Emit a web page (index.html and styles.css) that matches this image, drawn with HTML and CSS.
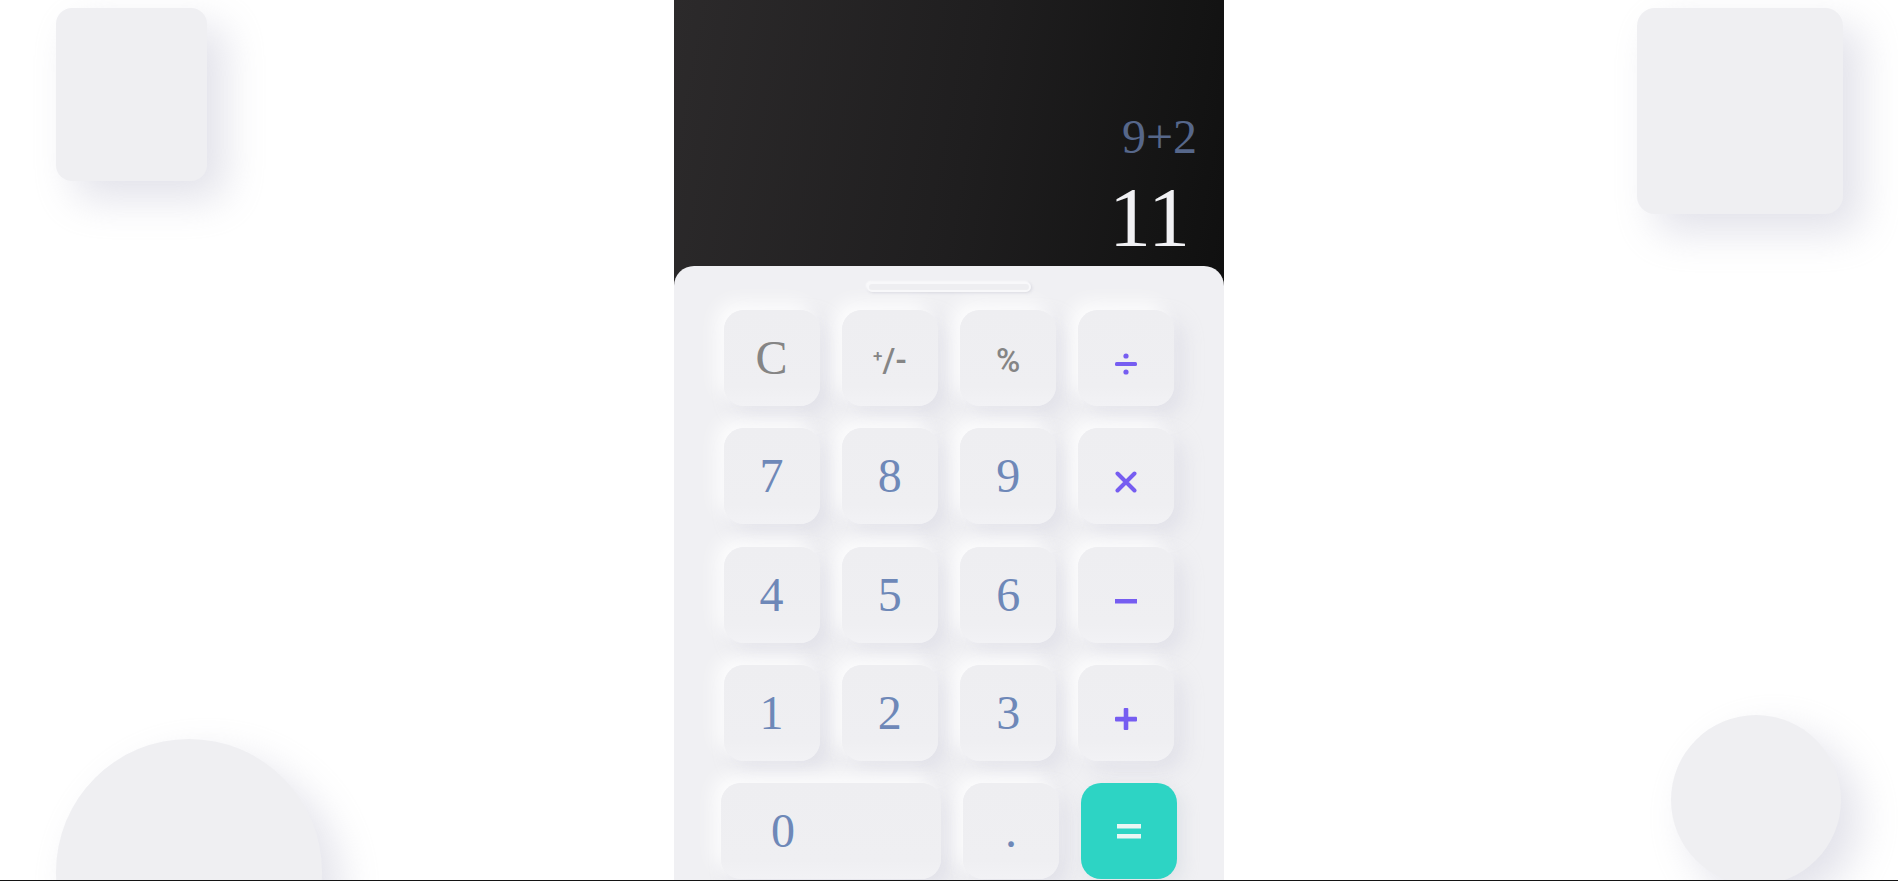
FILE: index.html
```html
<!DOCTYPE html>
<html lang="en">
<head>
<meta charset="utf-8">
<title>Calculator</title>
<link rel="stylesheet" href="styles.css">
</head>
<body>
<div class="page">
  <div class="deco deco-tl"></div>
  <div class="deco deco-tr"></div>
  <div class="deco deco-bl"></div>
  <div class="deco deco-br"></div>

  <main class="calc">
    <section class="display">
      <div class="expr">9+2</div>
      <div class="result">11</div>
    </section>
    <section class="keypad">
      <div class="grip"></div>
      <div class="grid">
        <button class="key fn serif">C</button>
        <button class="key fn sans"><sup>+</sup>/-</button>
        <button class="key fn sans">%</button>
        <button class="key op" aria-label="divide">
          <svg width="22" height="22" viewBox="0 0 22 22"><rect x="0" y="9" width="22" height="4" rx="1.5"/><circle cx="11" cy="3" r="2.6"/><circle cx="11" cy="19" r="2.6"/></svg>
        </button>

        <button class="key num">7</button>
        <button class="key num">8</button>
        <button class="key num">9</button>
        <button class="key op" aria-label="multiply">
          <svg width="22" height="22" viewBox="0 0 22 22"><path d="M2.5 2.5 L19.5 19.5 M19.5 2.5 L2.5 19.5" stroke-width="4" stroke-linecap="round" fill="none"/></svg>
        </button>

        <button class="key num">4</button>
        <button class="key num">5</button>
        <button class="key num">6</button>
        <button class="key op" aria-label="minus">
          <svg width="22" height="22" viewBox="0 0 22 22"><rect x="0" y="9" width="22" height="4.5"/></svg>
        </button>

        <button class="key num">1</button>
        <button class="key num">2</button>
        <button class="key num">3</button>
        <button class="key op" aria-label="plus">
          <svg width="22" height="22" viewBox="0 0 22 22"><rect x="0" y="8.8" width="22" height="4.6" rx="1"/><rect x="8.7" y="0" width="4.6" height="22" rx="1"/></svg>
        </button>
      </div>
      <div class="last-row">
        <button class="key num zero">0</button>
        <button class="key num">.</button>
        <button class="key eq" aria-label="equals">
          <svg width="24" height="16" viewBox="0 0 24 16"><rect x="0" y="1" width="24" height="4.5"/><rect x="0" y="11" width="24" height="4.5"/></svg>
        </button>
      </div>
    </section>
  </main>
</div>
</body>
</html>
```

FILE: styles.css
```css
html {
  background: #141414;
}

body {
  margin: 0;
  font-family: "Liberation Serif", "Times New Roman", serif;
}

.page {
  height: 880px;
  overflow: hidden;
  position: relative;
  background: #ffffff;
  display: flex;
  justify-content: center;
}

/* decorative neumorphic shapes on the canvas */
.deco {
  position: absolute;
  background: #efeff2;
  box-shadow: 18px 18px 40px rgba(190, 190, 208, 0.45), -14px -14px 36px rgba(255, 255, 255, 0.9);
}

.deco-tl {
  left: 56px;
  top: 8px;
  width: 151px;
  height: 173px;
  border-radius: 16px;
}

.deco-tr {
  left: 1637px;
  top: 8px;
  width: 206px;
  height: 206px;
  border-radius: 18px;
}

.deco-bl {
  left: 56px;
  top: 739px;
  width: 266px;
  height: 266px;
  border-radius: 50%;
}

.deco-br {
  left: 1671px;
  top: 715px;
  width: 170px;
  height: 170px;
  border-radius: 50%;
}

/* calculator */
.calc {
  position: relative;
  z-index: 1;
  width: 550px;
  height: 880px;
  display: flex;
  flex-direction: column;
  background: linear-gradient(100deg, #2c2a2b 0%, #1f1e1f 45%, #141414 75%, #0a0a0a 100%);
  overflow: hidden;
}

.display {
  height: 266px;
  flex-shrink: 0;
  box-sizing: border-box;
  padding: 0 27px 6.3px 0;
  display: flex;
  flex-direction: column;
  justify-content: flex-end;
  align-items: flex-end;
}

.expr {
  font-size: 48px;
  line-height: 48px;
  color: #56678a;
  margin-bottom: 14.9px;
}

.result {
  font-size: 84px;
  line-height: 84px;
  color: #f1f1f4;
  margin-right: 7px;
}

.keypad {
  flex: 1;
  background: #f0f0f3;
  border-radius: 20px 20px 0 0;
  padding-top: 16px;
  display: flex;
  flex-direction: column;
  align-items: center;
}

.grip {
  width: 164px;
  height: 10px;
  box-sizing: border-box;
  border-radius: 6px;
  background: #eeeef1;
  border: 2px solid #f8f8fa;
  box-shadow: 1px 1px 3px rgba(170, 170, 185, 0.35), -1px -1px 2px rgba(255, 255, 255, 0.9);
  margin-bottom: 18px;
}

.grid {
  display: grid;
  grid-template-columns: repeat(4, 96px);
  grid-auto-rows: 96px;
  gap: 22.3px;
  margin-bottom: 22.3px;
}

.last-row {
  display: flex;
  gap: 22px;
}

.key {
  width: 96px;
  height: 96px;
  border: none;
  padding: 0;
  border-radius: 20px;
  background: linear-gradient(180deg, #eeeef1 0%, #efeff2 80%, #f2f2f5 100%);
  box-shadow: -8px -8px 18px rgba(255, 255, 255, 0.85), 9px 9px 20px rgba(200, 200, 215, 0.38);
  display: flex;
  align-items: center;
  justify-content: center;
  font-family: "Liberation Serif", "Times New Roman", serif;
  font-size: 48px;
  line-height: 1;
  cursor: pointer;
}

.num {
  color: #6e88b8;
}

.fn {
  color: #858585;
}

.fn.sans {
  font-family: Roboto, "Liberation Sans", sans-serif;
  font-weight: 500;
  font-size: 33px;
  padding-top: 4px;
}

.fn sup {
  font-size: 17px;
  line-height: 0;
  position: relative;
  top: -4px;
  vertical-align: super;
}

.op svg {
  fill: #765df1;
  stroke: #765df1;
  margin-top: 12px;
}

.op svg rect,
.op svg circle {
  stroke: none;
}

.zero {
  width: 220px;
  justify-content: flex-start;
  padding-left: 50px;
  box-sizing: border-box;
}

.eq {
  background: #2dd4c4;
  box-shadow: 6px 6px 16px rgba(190, 200, 210, 0.3);
}

.eq svg {
  fill: #eaf6f4;
}
```
